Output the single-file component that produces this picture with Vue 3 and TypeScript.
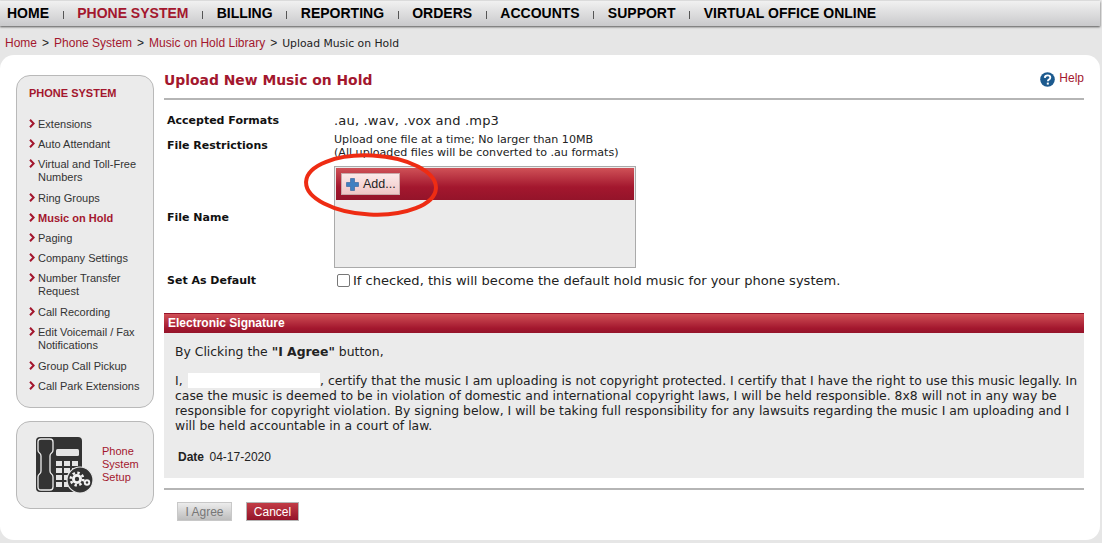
<template>
  <div class="page">
    <nav class="topnav">
      <template v-for="(item, i) in navItems" :key="item">
        <span v-if="i > 0" class="nav-sep"></span>
        <a :class="['nav-item', { active: item === 'PHONE SYSTEM' }]">{{ item }}</a>
      </template>
    </nav>

    <div class="crumbs">
      <a>Home</a><span class="gt">&gt;</span><a>Phone System</a><span class="gt">&gt;</span><a>Music on Hold Library</a><span class="gt">&gt;</span><span class="current">Upload Music on Hold</span>
    </div>

    <div class="card">
      <aside class="side">
        <div class="side-menu">
          <h4>PHONE SYSTEM</h4>
          <ul>
            <li v-for="link in sideLinks" :key="link" :class="{ current: link === 'Music on Hold', wrapped: link.length > 22 }">
              <svg class="chev" width="6" height="9" viewBox="0 0 6 9"><path d="M1 .8 4.6 4.5 1 8.2" fill="none" stroke="#a3172e" stroke-width="2" /></svg>
              <span>{{ link }}</span>
            </li>
          </ul>
        </div>
        <div class="setup">
          <svg class="phone" width="60" height="58" viewBox="0 0 60 58">
            <rect x="0" y="1" width="46" height="55" rx="4" fill="#333" />
            <path d="M2 6q0-3 3-3h9q3 0 3 3v8q0 2-1.5 3-1.5 1-1.5 3v15q0 2 1.5 3 1.5 1 1.5 3v10q0 3-3 3H5q-3 0-3-3V41q0-2 1.5-3Q5 37 5 35V20q0-2-1.5-3Q2 16 2 14Z" fill="#333" stroke="#eee" stroke-width="1.3" />
            <rect x="20" y="13" width="23" height="7" rx="1.5" fill="#e4e4e4" />
            <g fill="#e4e4e4">
              <rect x="20" y="25" width="6" height="5" /><rect x="28" y="25" width="6" height="5" /><rect x="36" y="25" width="6" height="5" />
              <rect x="20" y="32" width="6" height="5" /><rect x="28" y="32" width="6" height="5" /><rect x="36" y="32" width="6" height="5" />
              <rect x="20" y="39" width="6" height="5" /><rect x="28" y="39" width="6" height="5" />
              <rect x="20" y="46" width="6" height="5" /><rect x="28" y="46" width="6" height="5" />
            </g>
            <circle cx="44" cy="44" r="13" fill="#333" stroke="#e8e8e8" stroke-width="1.2" />
            <circle cx="41" cy="43" r="6.2" fill="none" stroke="#f2f2f2" stroke-width="2.6" stroke-dasharray="2.4 2.4" />
            <circle cx="41" cy="43" r="5" fill="#f2f2f2" />
            <circle cx="41" cy="43" r="2.2" fill="#333" />
            <circle cx="51" cy="46.5" r="3.2" fill="#f2f2f2" />
            <circle cx="51" cy="46.5" r="1.2" fill="#333" />
          </svg>
          <span class="setup-label">Phone<br />System<br />Setup</span>
        </div>
      </aside>

      <main class="main">
        <header class="head">
          <h1>Upload New Music on Hold</h1>
          <a class="help">
            <svg width="15" height="15" viewBox="0 0 15 15">
              <circle cx="7.5" cy="7.5" r="7.3" fill="#1c5a8e" />
              <path d="M4.8 5.8q.2-2.4 2.8-2.4 2.7 0 2.7 2.2 0 1.3-1.4 2-1 .6-1 1.6" fill="none" stroke="#fff" stroke-width="1.9" />
              <rect x="6.8" y="10.6" width="2" height="2" fill="#fff" />
            </svg>
            Help
          </a>
        </header>

        <div class="form">
          <div class="row formats">
            <label>Accepted Formats</label>
            <div class="val big spaced">.au, .wav, .vox and .mp3</div>
          </div>
          <div class="row restrictions">
            <label>File Restrictions</label>
            <div class="val small">Upload one file at a time; No larger than 10MB<br />(All uploaded files will be converted to .au formats)</div>
          </div>
          <div class="row filename">
            <label>File Name</label>
            <div class="uploader">
              <div class="up-bar">
                <button class="add">
                  <svg width="13" height="13" viewBox="0 0 13 13"><path d="M4.5.5h4v4h4v4h-4v4h-4v-4h-4v-4h4Z" fill="#3f7fc1" stroke="#2c5f9a" stroke-width=".6" /></svg>
                  Add...
                </button>
              </div>
            </div>
          </div>
          <div class="row dflt">
            <label>Set As Default</label>
            <div class="val big check"><span class="box"></span>If checked, this will become the default hold music for your phone system.</div>
          </div>
        </div>

        <section class="sig">
          <div class="sig-bar">Electronic Signature</div>
          <div class="sig-body">
            <p class="intro">By Clicking the <b>"I Agree"</b> button,</p>
            <p class="legal">I, <span class="blank"></span>, certify that the music I am uploading is not copyright protected. I certify that I have the right to use this music legally. In case the music is deemed to be in violation of domestic and international copyright laws, I will be held responsible. 8x8 will not in any way be responsible for copyright violation. By signing below, I will be taking full responsibility for any lawsuits regarding the music I am uploading and I will be held accountable in a court of law.</p>
            <p class="date"><b>Date</b>04-17-2020</p>
          </div>
        </section>

        <div class="actions">
          <button class="btn off">I Agree</button>
          <button class="btn cancel">Cancel</button>
        </div>
      </main>
    </div>

    <svg class="ring" width="140" height="70" viewBox="0 0 140 70">
      <ellipse cx="69" cy="32" rx="65" ry="29.5" transform="rotate(3 69 32)" fill="none" stroke="#ee2c13" stroke-width="4" />
    </svg>
  </div>
</template>

<script setup lang="ts">
const navItems: string[] = [
  "HOME",
  "PHONE SYSTEM",
  "BILLING",
  "REPORTING",
  "ORDERS",
  "ACCOUNTS",
  "SUPPORT",
  "VIRTUAL OFFICE ONLINE",
];

const sideLinks: string[] = [
  "Extensions",
  "Auto Attendant",
  "Virtual and Toll-Free Numbers",
  "Ring Groups",
  "Music on Hold",
  "Paging",
  "Company Settings",
  "Number Transfer Request",
  "Call Recording",
  "Edit Voicemail / Fax Notifications",
  "Group Call Pickup",
  "Call Park Extensions",
];
</script>

<style>
html,
body {
  margin: 0;
  background: #e6e6e6;
}
</style>

<style scoped>
.page {
  position: relative;
  width: 1102px;
  height: 543px;
  overflow: hidden;
  background: #e6e6e6;
  font-family: "Liberation Sans", Arial, sans-serif;
}

.topnav {
  display: flex;
  align-items: center;
  width: 1100px;
  height: 25px;
  margin-top: 1px;
  padding: 0 0 2px 7px;
  box-sizing: border-box;
  background: linear-gradient(#f1f1f1, #c9c9cb);
  box-shadow: 0 1px 2px #555;
  font-size: 14px;
  font-weight: bold;
  color: #000;
}

.nav-item.active {
  color: #a3172e;
}

.nav-sep {
  width: 1px;
  height: 8px;
  margin: 4px 13.6px 0 13.6px;
  background: #555;
}

.crumbs {
  height: 29px;
  padding: 10px 0 0 5px;
  box-sizing: border-box;
  font-size: 12px;
  line-height: 14px;
  color: #222;
}

.crumbs a {
  color: #a3172e;
}

.gt {
  margin: 0 5px;
}

.crumbs .current {
  font-family: "DejaVu Sans", Verdana, sans-serif;
  font-size: 10.8px;
}

.card {
  display: flex;
  width: 1100px;
  height: 485px;
  box-sizing: border-box;
  padding: 20px 16px 0 16px;
  background: #fff;
  border-radius: 14px;
}

.side {
  flex: 0 0 138px;
  margin-right: 10px;
}

.side-menu {
  height: 333px;
  box-sizing: border-box;
  padding: 11px 4px 0 12px;
  background: #ebebeb;
  border: 1px solid #b9b9b9;
  border-radius: 14px;
}

.side-menu h4 {
  margin: 0 0 18px;
  font-size: 11px;
  line-height: 13px;
  font-weight: bold;
  color: #a3172e;
}

.side-menu ul {
  margin: 0;
  padding: 0;
  list-style: none;
}

.side-menu li {
  display: flex;
  gap: 3px;
  margin-bottom: 7px;
  font-size: 11px;
  line-height: 13px;
  color: #333;
}

.side-menu li.wrapped {
  margin-bottom: 8px;
}

.side-menu li.current {
  font-weight: bold;
  color: #a3172e;
}

.chev {
  flex: none;
  margin: 1px 0 0 0;
}

.setup {
  display: flex;
  align-items: center;
  height: 88px;
  box-sizing: border-box;
  margin-top: 13px;
  padding-left: 19px;
  background: #ebebeb;
  border: 1px solid #b9b9b9;
  border-radius: 14px;
}

.phone {
  flex: none;
}

.setup-label {
  margin: -2px 0 0 6px;
  font-size: 11px;
  line-height: 13px;
  color: #a3172e;
}

.main {
  flex: 1;
  min-width: 0;
  font-family: "DejaVu Sans", Verdana, sans-serif;
}

.head {
  display: flex;
  justify-content: space-between;
  height: 23px;
  border-bottom: 2px solid #b5b5b5;
}

.head h1 {
  margin: 0;
  font-size: 13.9px;
  line-height: 11px;
  font-weight: bold;
  color: #a3172e;
}

.help {
  display: flex;
  gap: 4px;
  font-family: "Liberation Sans", Arial, sans-serif;
  font-size: 12px;
  line-height: 13px;
  color: #a3172e;
  height: 15px;
  margin-top: -3px;
}

.form {
  padding: 14px 0 0 3px;
}

.row {
  display: flex;
}

.row label {
  flex: 0 0 167px;
  font-size: 11px;
  line-height: 13px;
  font-weight: bold;
  color: #111;
}

.val {
  color: #222;
}

.big {
  font-size: 13.05px;
  line-height: 14px;
}

.spaced {
  letter-spacing: 0.17px;
}

.small {
  font-size: 11.1px;
  line-height: 13px;
}

.formats {
  height: 19px;
}

.restrictions {
  height: 33px;
}

.restrictions label {
  margin-top: 6px;
}

.filename {
  height: 102px;
}

.filename label {
  margin-top: 45px;
}

.uploader {
  width: 302px;
  height: 102px;
  box-sizing: border-box;
  padding: 1px;
  background: #ebebeb;
  border: 1px solid #aaa;
}

.up-bar {
  height: 32px;
  padding: 5px 0 0 5px;
  box-sizing: border-box;
  background: linear-gradient(#cf5157, #a3172e 60%, #94142a);
}

.add {
  display: flex;
  align-items: center;
  gap: 4px;
  width: 59px;
  height: 22px;
  padding: 0 0 0 4px;
  background: linear-gradient(#fbeaea, #f0c6c6);
  border: 1px solid #c9a9a9;
  font-family: "Liberation Sans", Arial, sans-serif;
  font-size: 12.5px;
  color: #222;
}

.dflt {
  margin-top: 6px;
  height: 39px;
}

.check {
  display: flex;
  align-items: center;
  height: 14px;
}

.box {
  width: 11px;
  height: 11px;
  margin: -1px 3px 0 3px;
  background: #fff;
  border: 1px solid #777;
  border-radius: 2px;
}

.sig-bar {
  height: 20px;
  box-sizing: border-box;
  padding-left: 4px;
  background: linear-gradient(#d05056, #a3172e 75%, #94142a);
  border-top: 1px solid #94142a;
  font-family: "Liberation Sans", Arial, sans-serif;
  font-size: 12px;
  font-weight: bold;
  line-height: 18px;
  color: #fff;
}

.sig-body {
  height: 145px;
  box-sizing: border-box;
  padding: 11px 6px 0 11px;
  background: #ebebeb;
  font-size: 12.4px;
  line-height: 15px;
  color: #222;
}

.sig-body p {
  margin: 0;
}

.legal {
  margin-top: 14px !important;
}

.blank {
  display: inline-block;
  width: 132px;
  height: 15px;
  margin-left: 1.5px;
  vertical-align: -3px;
  background: #fff;
}

.date {
  margin: 17px 0 0 3px !important;
  font-family: "Liberation Sans", Arial, sans-serif;
  font-size: 12px;
}

.date b {
  margin-right: 5.5px;
}

.actions {
  display: flex;
  gap: 14px;
  margin-top: 10px;
  padding: 12px 0 0 13px;
  border-top: 2px solid #b5b5b5;
}

.btn {
  height: 19px;
  padding: 0;
  font-family: "Liberation Sans", Arial, sans-serif;
  font-size: 12px;
}

.btn.off {
  width: 55px;
  background: linear-gradient(#ececec, #bdbdbd);
  border: 1px solid #c8c8c8;
  color: #777;
}

.btn.cancel {
  width: 53px;
  background: linear-gradient(#c23c46, #94142a);
  border: 1px solid #b5b5b5;
  color: #fff;
}

.ring {
  position: absolute;
  left: 302px;
  top: 153px;
}
</style>
